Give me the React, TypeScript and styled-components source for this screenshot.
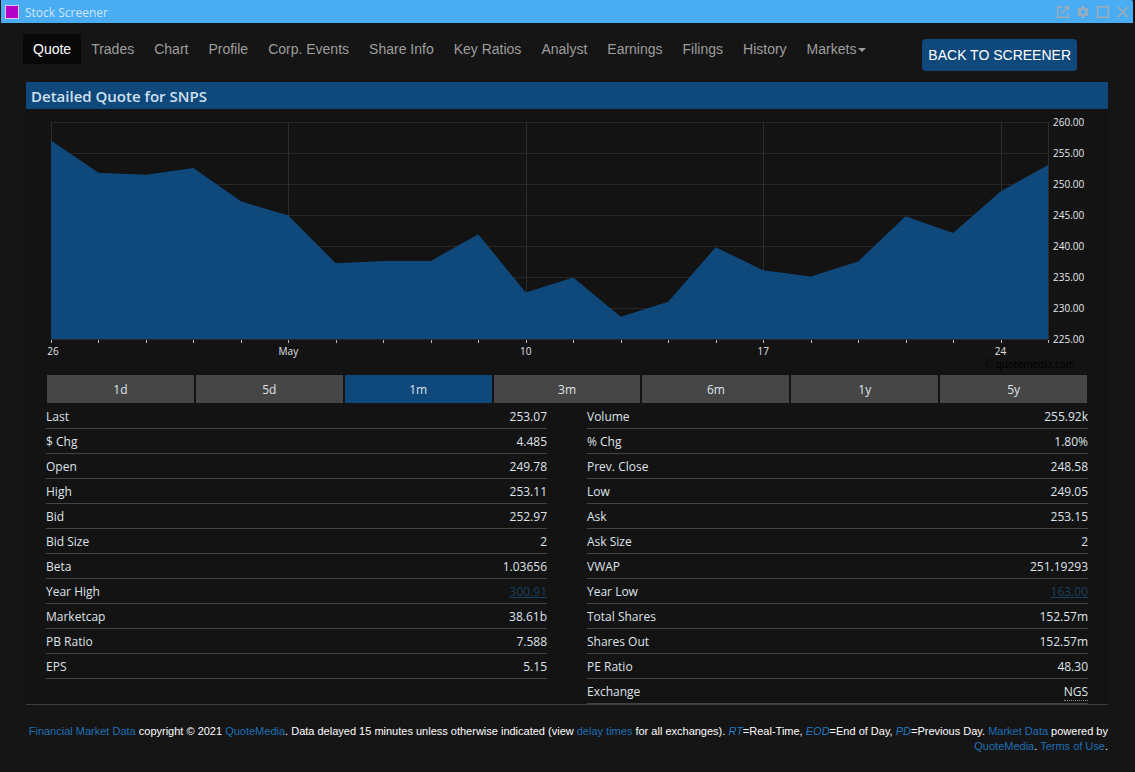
import React, { useEffect, useRef, useState } from 'react';
import styled, { createGlobalStyle, css } from 'styled-components';

const uiFont = '"Open Sans", "Noto Sans", sans-serif';
const navFont = '"Liberation Sans", Arial, sans-serif';

const color = {
  page: '#151515',
  panel: '#131313',
  title: '#4aacf2',
  accent: '#0f487a',
  text: '#dfe3ea',
  grid: '#262626',
};

const GlobalStyle = createGlobalStyle`
  * { box-sizing: border-box; }
  body { margin: 0; background: ${color.page}; color: ${color.text}; font-family: ${uiFont}; }
  button { font: inherit; color: inherit; border: 0; background: none; padding: 0; cursor: pointer; }
`;

const Window = styled.div`
  min-height: 100vh;
  padding: 0 2px 0 1px;
  background: ${color.page};
`;

const TitleBar = styled.header`
  display: flex;
  align-items: center;
  height: 23px;
  padding: 0 3px 0 4px;
  background: ${color.title};
  border-radius: 0 2px 0 0;
`;

const AppMark = styled.span`
  width: 14px;
  height: 14px;
  background: #b400c8;
  border: 1px solid #e2c4f2;
`;

const WindowTitle = styled.h1`
  flex: 1;
  margin: 0 0 0 6px;
  padding-top: 2px;
  font-size: 12px;
  line-height: 21px;
  font-weight: 400;
  color: #cfe6fa;
`;

const WindowActions = styled.div`
  display: flex;
  gap: 6px;
`;

const IconButton = styled.button`
  && {
    display: block;
    width: 14px;
    height: 14px;
    color: #a3acb4;
  }
  svg { display: block; }
`;

const TopBar = styled.div`
  display: flex;
  align-items: flex-start;
  padding: 11px 56px 0 22px;
`;

const Nav = styled.nav`
  display: flex;
  flex: 1;
  font-family: ${navFont};
`;

const NavLink = styled.a<{ $active?: boolean }>`
  padding: 5px 10px;
  font-size: 14px;
  line-height: 20px;
  white-space: nowrap;
  text-decoration: none;
  color: #9d9d9d;
  ${p => p.$active && css`
    color: #fff;
    background: #080808;
  `}
`;

const Caret = styled.span`
  display: inline-block;
  margin-left: 2px;
  vertical-align: middle;
  border: 4px solid transparent;
  border-top-color: currentColor;
  border-bottom: 0;
`;

const BackButton = styled.button`
  && {
    margin-top: 5px;
    padding: 6px;
    border-radius: 4px;
    background: ${color.accent};
    color: #fff;
    font-family: ${navFont};
    font-size: 14px;
    line-height: 20px;
    white-space: nowrap;
  }
`;

const Main = styled.main`
  margin: 11px 25px 0;
`;

const Panel = styled.section`
  background: ${color.panel};
  border-bottom: 1px solid #3c3c3c;
`;

const PanelTitle = styled.h2`
  margin: 0;
  padding: 2px 5px 0;
  font-size: 15px;
  line-height: 25px;
  font-weight: 600;
  color: #cfe0f2;
  background: ${color.accent};
`;

const PanelBody = styled.div`
  padding: 0 20px;
`;

const ChartFrame = styled.div`
  height: 265px;
  svg { display: block; }
  text { font-family: ${uiFont}; }
`;

const Ranges = styled.div`
  display: flex;
  gap: 2px;
  padding: 1px;
`;

const RangeButton = styled.button<{ $active?: boolean }>`
  && {
    flex: 1;
    padding-top: 2px;
    font-size: 12px;
    line-height: 26px;
    color: ${color.text};
    background: ${p => (p.$active ? color.accent : '#464646')};
  }
`;

const Tables = styled.div`
  display: grid;
  grid-template-columns: 1fr 1fr;
  gap: 40px;
  align-items: start;
`;

const QuoteTable = styled.table`
  width: 100%;
  border-collapse: separate;
  border-spacing: 0;
  font-size: 12px;
  line-height: 22px;
  th, td {
    padding: 2px 0 0;
    font-weight: 400;
    border-bottom: 1px solid #434343;
  }
  th { text-align: left; }
  td { text-align: right; }
`;

const ValueLink = styled.a`
  color: #17405f;
`;

const Abbr = styled.abbr`
  display: inline-block;
  line-height: 16px;
  text-decoration: none;
  border-bottom: 1px dotted #8a8a8a;
`;

const Footer = styled.footer`
  padding-top: 19px;
  font-family: ${navFont};
  font-size: 11px;
  line-height: 15px;
  text-align: right;
  color: #fff;
  a { color: #1f6fb5; text-decoration: none; }
  em { color: #2479c2; }
`;

const prices = [
  257.0, 251.8, 251.5, 252.6, 247.2, 244.9, 237.2, 237.6, 237.6, 241.9, 232.5,
  234.9, 228.6, 231.0, 239.8, 236.1, 235.1, 237.5, 244.8, 242.1, 248.8, 253.07,
];
const yTicks = [260, 255, 250, 245, 240, 235, 230, 225];
const xLabels: Record<number, string> = { 0: '26', 5: 'May', 10: '10', 15: '17', 20: '24' };

function PriceChart() {
  const frame = useRef<HTMLDivElement>(null);
  const [width, setWidth] = useState(1042);

  useEffect(() => {
    const node = frame.current;
    if (!node) return;
    const observer = new ResizeObserver(([entry]) => setWidth(entry.contentRect.width));
    observer.observe(node);
    return () => observer.disconnect();
  }, []);

  const left = 5;
  const right = width - 40;
  const top = 13;
  const bottom = 230;
  const x = (i: number) => left + ((right - left) * i) / (prices.length - 1);
  const y = (v: number) => top + ((260 - v) / 35) * (bottom - top);
  const crisp = (n: number) => Math.round(n) + 0.5;
  const area = prices.map((v, i) => `${x(i)},${y(v)}`).join(' ');

  return (
    <ChartFrame ref={frame}>
      <svg width={width} height={265} role="img" aria-label="SNPS price, one month">
        {yTicks.map(v => (
          <line key={v} x1={left} x2={right} y1={crisp(y(v))} y2={crisp(y(v))} stroke={color.grid} />
        ))}
        {[0, 5, 10, 15, 20, 21].map(i => (
          <line key={i} x1={crisp(x(i))} x2={crisp(x(i))} y1={top} y2={bottom} stroke="#2c2c2c" />
        ))}
        <polygon points={`${left},${bottom} ${area} ${right},${bottom}`} fill={color.accent} />
        {prices.map((_, i) => (
          <line key={i} x1={crisp(x(i))} x2={crisp(x(i))} y1={bottom + 1} y2={bottom + 4} stroke="#b8b8b8" />
        ))}
        {Object.entries(xLabels).map(([i, label]) => (
          <text key={i} x={i === '0' ? 7 : x(Number(i))} y={246} fill="#e2e2e8" fontSize={10} fontWeight={500} textAnchor="middle">
            {label}
          </text>
        ))}
        {yTicks.map(v => (
          <text key={v} x={right + 5} y={y(v) + 4} fill="#e8e8ee" fontSize={10} fontWeight={500}>
            {v.toFixed(2)}
          </text>
        ))}
        <text x={right + 27} y={259} fill="#000" fontSize={10} textAnchor="end">© quotemedia.com</text>
      </svg>
    </ChartFrame>
  );
}

type Row = { label: string; value: string; kind?: 'link' | 'abbr' };

const leftRows: Row[] = [
  { label: 'Last', value: '253.07' },
  { label: '$ Chg', value: '4.485' },
  { label: 'Open', value: '249.78' },
  { label: 'High', value: '253.11' },
  { label: 'Bid', value: '252.97' },
  { label: 'Bid Size', value: '2' },
  { label: 'Beta', value: '1.03656' },
  { label: 'Year High', value: '300.91', kind: 'link' },
  { label: 'Marketcap', value: '38.61b' },
  { label: 'PB Ratio', value: '7.588' },
  { label: 'EPS', value: '5.15' },
];

const rightRows: Row[] = [
  { label: 'Volume', value: '255.92k' },
  { label: '% Chg', value: '1.80%' },
  { label: 'Prev. Close', value: '248.58' },
  { label: 'Low', value: '249.05' },
  { label: 'Ask', value: '253.15' },
  { label: 'Ask Size', value: '2' },
  { label: 'VWAP', value: '251.19293' },
  { label: 'Year Low', value: '163.00', kind: 'link' },
  { label: 'Total Shares', value: '152.57m' },
  { label: 'Shares Out', value: '152.57m' },
  { label: 'PE Ratio', value: '48.30' },
  { label: 'Exchange', value: 'NGS', kind: 'abbr' },
];

function Quotes({ rows }: { rows: Row[] }) {
  return (
    <QuoteTable>
      <tbody>
        {rows.map(({ label, value, kind }) => (
          <tr key={label}>
            <th scope="row">{label}</th>
            <td>
              {kind === 'link' ? <ValueLink href="#">{value}</ValueLink> : kind === 'abbr' ? <Abbr>{value}</Abbr> : value}
            </td>
          </tr>
        ))}
      </tbody>
    </QuoteTable>
  );
}

const tabs = [
  'Quote', 'Trades', 'Chart', 'Profile', 'Corp. Events', 'Share Info', 'Key Ratios',
  'Analyst', 'Earnings', 'Filings', 'History', 'Markets',
];
const ranges = ['1d', '5d', '1m', '3m', '6m', '1y', '5y'];

export default function App() {
  const [range, setRange] = useState('1m');

  return (
    <Window>
      <GlobalStyle />
      <TitleBar>
        <AppMark />
        <WindowTitle>Stock Screener</WindowTitle>
        <WindowActions>
          <IconButton aria-label="Open in new window">
            <svg width="14" height="14" viewBox="0 0 14 14" fill="none" stroke="currentColor" strokeWidth="1.5">
              <path d="M6 2H1.75v10.25H12V8M8.5 1.75h3.75V5.5M12 2L5.5 8.5" />
            </svg>
          </IconButton>
          <IconButton aria-label="Settings">
            <svg width="14" height="14" viewBox="0 0 24 24" fill="currentColor">
              <path fillRule="evenodd" d="M19.43 12.98a7.8 7.8 0 0 0 0-1.96l2.11-1.65a.5.5 0 0 0 .12-.64l-2-3.46a.5.5 0 0 0-.61-.22l-2.49 1a7.3 7.3 0 0 0-1.69-.98l-.38-2.65A.49.49 0 0 0 14 2h-4a.49.49 0 0 0-.49.42l-.38 2.65c-.61.25-1.17.59-1.69.98l-2.49-1a.5.5 0 0 0-.61.22l-2 3.46a.5.5 0 0 0 .12.64l2.11 1.65a7.8 7.8 0 0 0 0 1.96l-2.11 1.65a.5.5 0 0 0-.12.64l2 3.46c.12.22.39.3.61.22l2.49-1c.52.4 1.08.73 1.69.98l.38 2.65c.03.24.24.42.49.42h4c.25 0 .46-.18.49-.42l.38-2.65a7.3 7.3 0 0 0 1.69-.98l2.49 1c.22.08.49 0 .61-.22l2-3.46a.5.5 0 0 0-.12-.64zM12 16.2a4.2 4.2 0 1 1 0-8.4 4.2 4.2 0 0 1 0 8.4z" />
            </svg>
          </IconButton>
          <IconButton aria-label="Maximize">
            <svg width="14" height="14" viewBox="0 0 14 14" fill="none" stroke="currentColor" strokeWidth="1.5">
              <rect x="1.75" y="1.75" width="10.5" height="10.5" />
            </svg>
          </IconButton>
          <IconButton aria-label="Close">
            <svg width="14" height="14" viewBox="0 0 14 14" fill="none" stroke="currentColor" strokeWidth="1.5">
              <path d="M2 2l10 10M12 2L2 12" />
            </svg>
          </IconButton>
        </WindowActions>
      </TitleBar>

      <TopBar>
        <Nav>
          {tabs.map(tab => (
            <NavLink key={tab} href="#" $active={tab === 'Quote'}>
              {tab}
              {tab === 'Markets' && <Caret />}
            </NavLink>
          ))}
        </Nav>
        <BackButton>BACK TO SCREENER</BackButton>
      </TopBar>

      <Main>
        <Panel>
          <PanelTitle>Detailed Quote for SNPS</PanelTitle>
          <PanelBody>
            <PriceChart />
            <Ranges>
              {ranges.map(r => (
                <RangeButton key={r} $active={r === range} onClick={() => setRange(r)}>{r}</RangeButton>
              ))}
            </Ranges>
            <Tables>
              <Quotes rows={leftRows} />
              <Quotes rows={rightRows} />
            </Tables>
          </PanelBody>
        </Panel>
        <Footer>
          <a href="#">Financial Market Data</a> copyright © 2021 <a href="#">QuoteMedia</a>. Data delayed 15 minutes
          unless otherwise indicated (view <a href="#">delay times</a> for all exchanges). <em>RT</em>=Real-Time,{' '}
          <em>EOD</em>=End of Day, <em>PD</em>=Previous Day. <a href="#">Market Data</a> powered by{' '}
          <a href="#">QuoteMedia</a>. <a href="#">Terms of Use</a>.
        </Footer>
      </Main>
    </Window>
  );
}
